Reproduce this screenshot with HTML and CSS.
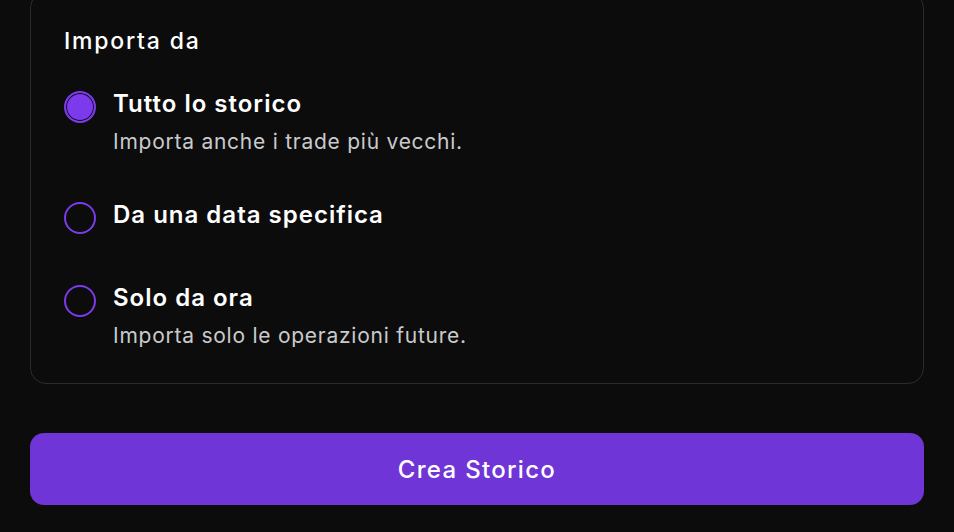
FILE: index.html
```html
<!DOCTYPE html>
<html lang="it">
<head>
<meta charset="utf-8">
<link rel="stylesheet" href="styles.css">
</head>
<body>
<main class="page">
  <section class="card">
    <h2 class="heading">Importa da</h2>
    <div class="options">
      <label class="option">
        <span class="radio radio--checked"></span>
        <span class="option-text">
          <span class="option-title">Tutto lo storico</span>
          <span class="option-desc">Importa anche i trade più vecchi.</span>
        </span>
      </label>
      <label class="option">
        <span class="radio"></span>
        <span class="option-text">
          <span class="option-title">Da una data specifica</span>
        </span>
      </label>
      <label class="option">
        <span class="radio"></span>
        <span class="option-text">
          <span class="option-title">Solo da ora</span>
          <span class="option-desc">Importa solo le operazioni future.</span>
        </span>
      </label>
    </div>
  </section>
  <button class="submit" type="button">Crea Storico</button>
</main>
</body>
</html>
```

FILE: styles.css
```css
html, body {
  margin: 0;
  padding: 0;
  background: #0c0c0c;
  height: 100%;
  overflow: hidden;
}

body {
  font-family: Inter, "Noto Sans", "Liberation Sans", sans-serif;
  color: #ffffff;
}

.page {
  padding: 0 30px;
}

.card {
  margin-top: -8px;
  border: 1px solid #2b2b2f;
  border-radius: 16px;
  padding: 32px 33px 38px;
}

.heading {
  margin: 0 0 31px;
  font-size: 23px;
  line-height: 32px;
  font-weight: 500;
  letter-spacing: 1.8px;
  color: #ffffff;
}

.options {
  display: flex;
  flex-direction: column;
  gap: 48px;
}

.option {
  display: flex;
  align-items: flex-start;
  gap: 17px;
}

.radio {
  flex: none;
  width: 32px;
  height: 32px;
  box-sizing: border-box;
  margin-top: 3px;
  border: 2px solid #7c3aed;
  border-radius: 50%;
}

.radio--checked {
  background: #7c3aed;
  box-shadow: inset 0 0 0 1px #0c0c0c;
}

.option-text {
  display: flex;
  flex-direction: column;
}

.option-title {
  font-size: 24px;
  line-height: 32px;
  font-weight: 600;
  letter-spacing: 1px;
  color: #ffffff;
}

.option-desc {
  margin-top: 13px;
  font-size: 21px;
  line-height: 18px;
  font-weight: 400;
  letter-spacing: 0.75px;
  color: #cacacd;
}

.submit {
  display: block;
  width: 100%;
  height: 72px;
  margin-top: 49px;
  border: none;
  border-radius: 14px;
  background: #6f35d6;
  color: #ffffff;
  font-family: inherit;
  font-size: 24px;
  font-weight: 500;
  letter-spacing: 1.3px;
}
```
